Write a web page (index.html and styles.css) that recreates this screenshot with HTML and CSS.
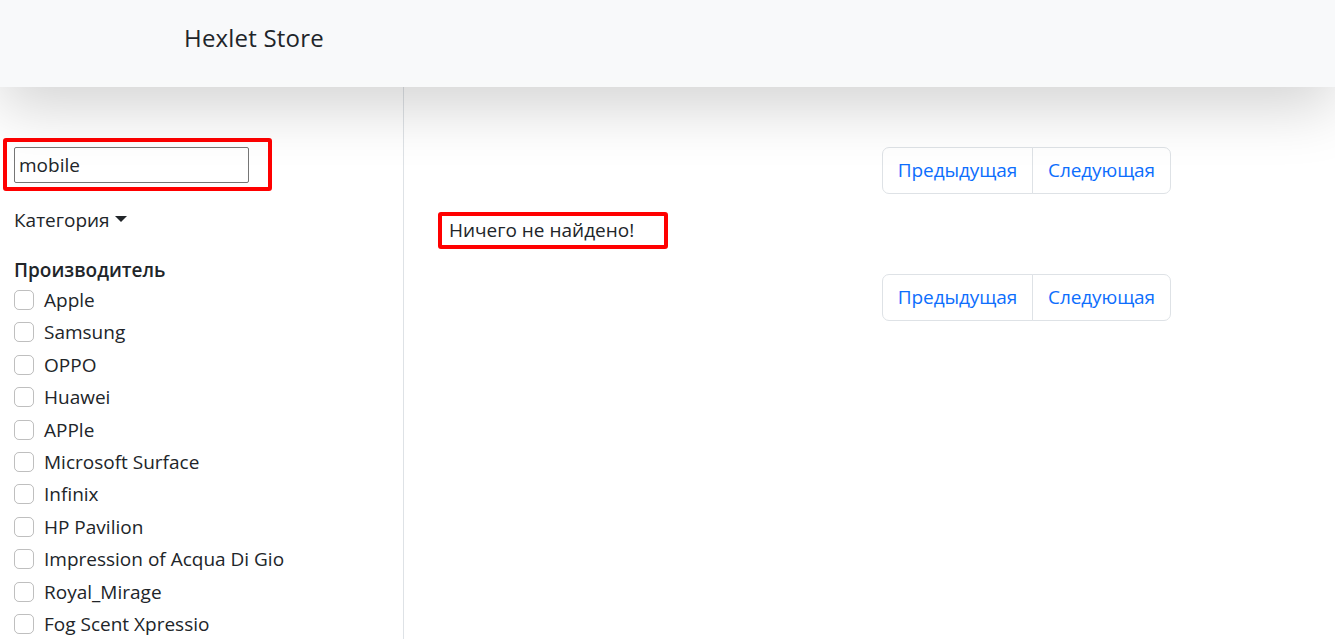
FILE: index.html
```html
<!DOCTYPE html>
<html lang="ru">
<head>
<meta charset="utf-8">
<title>Hexlet Store</title>
<link rel="stylesheet" href="styles.css">
</head>
<body>
<header class="navbar">
  <a class="brand" href="#">Hexlet Store</a>
</header>
<div class="layout">
  <aside class="sidebar">
    <div class="search-mark">
      <input class="search-input" type="text" value="mobile">
    </div>
    <div class="category">Категория<span class="caret"></span></div>
    <div class="filter-title">Производитель</div>
    <ul class="checks">
      <li class="check"><span class="box"></span>Apple</li>
      <li class="check"><span class="box"></span>Samsung</li>
      <li class="check"><span class="box"></span>OPPO</li>
      <li class="check"><span class="box"></span>Huawei</li>
      <li class="check"><span class="box"></span>APPle</li>
      <li class="check"><span class="box"></span>Microsoft Surface</li>
      <li class="check"><span class="box"></span>Infinix</li>
      <li class="check"><span class="box"></span>HP Pavilion</li>
      <li class="check"><span class="box"></span>Impression of Acqua Di Gio</li>
      <li class="check"><span class="box"></span>Royal_Mirage</li>
      <li class="check"><span class="box"></span>Fog Scent Xpressio</li>
    </ul>
  </aside>
  <main class="main">
    <div class="content">
      <nav class="pagination">
        <a class="page-link" href="#">Предыдущая</a>
        <a class="page-link" href="#">Следующая</a>
      </nav>
      <div class="empty-row"><span class="empty-mark">Ничего не найдено!</span></div>
      <nav class="pagination">
        <a class="page-link" href="#">Предыдущая</a>
        <a class="page-link" href="#">Следующая</a>
      </nav>
    </div>
  </main>
</div>
</body>
</html>
```
FILE: styles.css
```css
* { box-sizing: border-box; }
html, body { margin: 0; padding: 0; }
body {
  font-family: "Open Sans", "Noto Sans", sans-serif;
  font-size: 19px;
  line-height: 30px;
  color: #212529;
  background: #fff;
  height: 639px;
  overflow: hidden;
}
.navbar {
  position: relative;
  z-index: 2;
  height: 87px;
  background: #f8f9fa;
  box-shadow: 0 20px 60px rgba(0, 0, 0, 0.175);
  display: flex;
  align-items: center;
  padding-left: 184px;
  padding-bottom: 12px;
}
.brand {
  font-size: 24px;
  line-height: 36px;
  color: #212529;
  text-decoration: none;
  letter-spacing: 0.2px;
}
.layout {
  display: flex;
  height: 552px;
}
.sidebar {
  width: 404px;
  flex: none;
  border-right: 1px solid #dee2e6;
  padding: 51px 0 0 3px;
}
.search-mark {
  width: 269px;
  height: 53px;
  border: 4px solid #ff0000;
  border-radius: 3px;
  padding: 5px 0 0 7px;
}
.search-input {
  display: block;
  width: 235px;
  height: 36px;
  border: 1px solid #767676;
  border-radius: 2px;
  padding: 0 4px;
  font-family: inherit;
  font-size: 19px;
  color: #212529;
  outline: none;
}
.category {
  margin: 14px 0 0 11px;
  height: 30px;
  display: flex;
  align-items: center;
}
.caret {
  display: inline-block;
  margin-left: 5px;
  margin-top: -2px;
  border-top: 6px solid #212529;
  border-left: 6px solid transparent;
  border-right: 6px solid transparent;
}
.filter-title {
  margin: 20px 0 0 11px;
  font-weight: 600;
  height: 30px;
}
.checks {
  list-style: none;
  margin: 0;
  padding: 0 0 0 11px;
}
.check {
  display: flex;
  align-items: center;
  height: 30px;
  margin-bottom: 2.4px;
}
.box {
  width: 20px;
  height: 20px;
  border: 1px solid rgba(0, 0, 0, 0.25);
  border-radius: 5px;
  margin-right: 10px;
  flex: none;
}
.main {
  flex: 1;
  padding: 60px 0 0 34px;
}
.content {
  width: 733px;
}
.pagination {
  display: flex;
  justify-content: flex-end;
}
.page-link {
  display: block;
  padding: 7px 15px 8px;
  line-height: 30px;
  color: #0d6efd;
  text-decoration: none;
  border: 1px solid #dee2e6;
  letter-spacing: -0.1px;
}
.page-link:first-child {
  border-radius: 7px 0 0 7px;
}
.page-link + .page-link {
  margin-left: -1px;
  border-radius: 0 7px 7px 0;
}
.empty-row {
  margin: 18px 0 25px;
}
.empty-mark {
  display: inline-block;
  height: 37px;
  border: 4px solid #ff0000;
  border-radius: 3px;
  padding: 0 30px 0 7px;
  line-height: 29px;
}
```
